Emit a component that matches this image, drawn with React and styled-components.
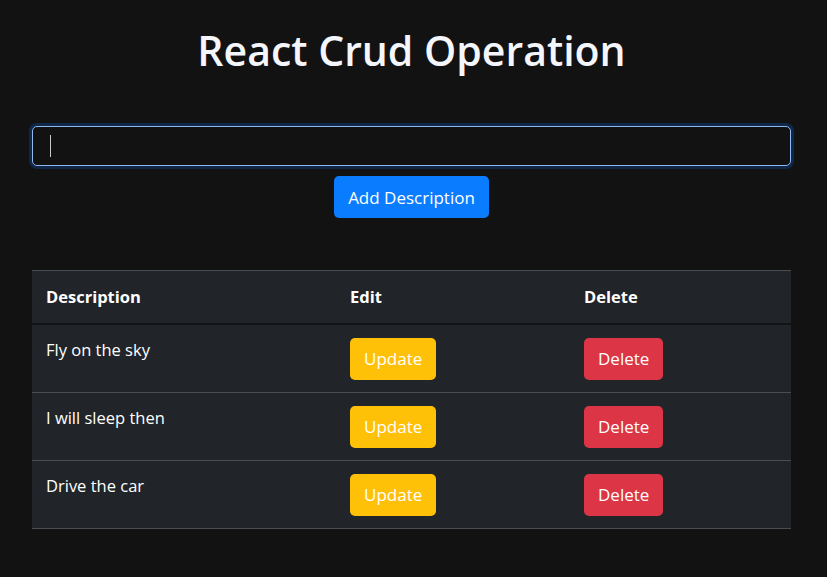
import React, { useState } from "react";
import styled, { createGlobalStyle } from "styled-components";

const GlobalStyle = createGlobalStyle`
  body {
    margin: 0;
    background: #121212;
    color: #fff;
    font-family: "Open Sans", "Noto Sans", sans-serif;
  }
  * { box-sizing: border-box; }
`;

const Page = styled.div`
  width: 759px;
  margin-left: 32px;
  padding-top: 26px;
`;

const Title = styled.h1`
  margin: 0 0 51px;
  text-align: center;
  font-size: 41px;
  font-weight: 600;
  line-height: 1.2;
  color: #f4f6fb;
`;

const Form = styled.div`
  display: flex;
  flex-direction: column;
  align-items: center;
  gap: 10px;
`;

const Field = styled.div`
  position: relative;
  width: 100%;

  &::after {
    content: "";
    position: absolute;
    left: 18px;
    top: 9px;
    width: 1px;
    height: 22px;
    background: #c8c8c8;
  }
`;

const Input = styled.input`
  display: block;
  width: 100%;
  height: 40px;
  padding: 0 17px;
  background: #121212;
  color: #fff;
  font: inherit;
  font-size: 17px;
  border: 1px solid #8db8f2;
  border-radius: 5px;
  outline: none;
  caret-color: transparent;
  box-shadow: 0 0 0 3px rgba(13, 90, 200, 0.3);
`;

const Button = styled.button`
  height: 42px;
  padding: 0 14px;
  border: none;
  border-radius: 5px;
  background: ${(p) => p.$bg};
  color: #fff;
  font-family: inherit;
  font-size: 17px;
  vertical-align: top;
  cursor: pointer;
`;

const Table = styled.table`
  width: 100%;
  margin-top: 52px;
  border-collapse: collapse;
  background: #212529;
  font-size: 16.5px;
`;

const Th = styled.th`
  width: ${(p) => p.$w}px;
  height: 53px;
  padding: 0 14px;
  text-align: left;
  font-weight: 700;
  border-top: 1px solid #4a4e53;
  border-bottom: 2px solid #111315;
`;

const Td = styled.td`
  padding: 13px 14px 12px;
  vertical-align: top;
  line-height: 1.5;
  border-bottom: 1px solid #4a4e53;
`;

const items = ["Fly on the sky", "I will sleep then", "Drive the car"];

export default function App() {
  const [value, setValue] = useState("");
  return (
    <>
      <GlobalStyle />
      <Page>
        <Title>React Crud Operation</Title>
        <Form>
          <Field>
            <Input value={value} onChange={(e) => setValue(e.target.value)} />
          </Field>
          <Button $bg="#0a7cff">Add Description</Button>
        </Form>
        <Table>
          <thead>
            <tr>
              <Th $w={304}>Description</Th>
              <Th $w={234}>Edit</Th>
              <Th>Delete</Th>
            </tr>
          </thead>
          <tbody>
            {items.map((d) => (
              <tr key={d}>
                <Td>{d}</Td>
                <Td>
                  <Button $bg="#ffc107">Update</Button>
                </Td>
                <Td>
                  <Button $bg="#dc3545">Delete</Button>
                </Td>
              </tr>
            ))}
          </tbody>
        </Table>
      </Page>
    </>
  );
}
